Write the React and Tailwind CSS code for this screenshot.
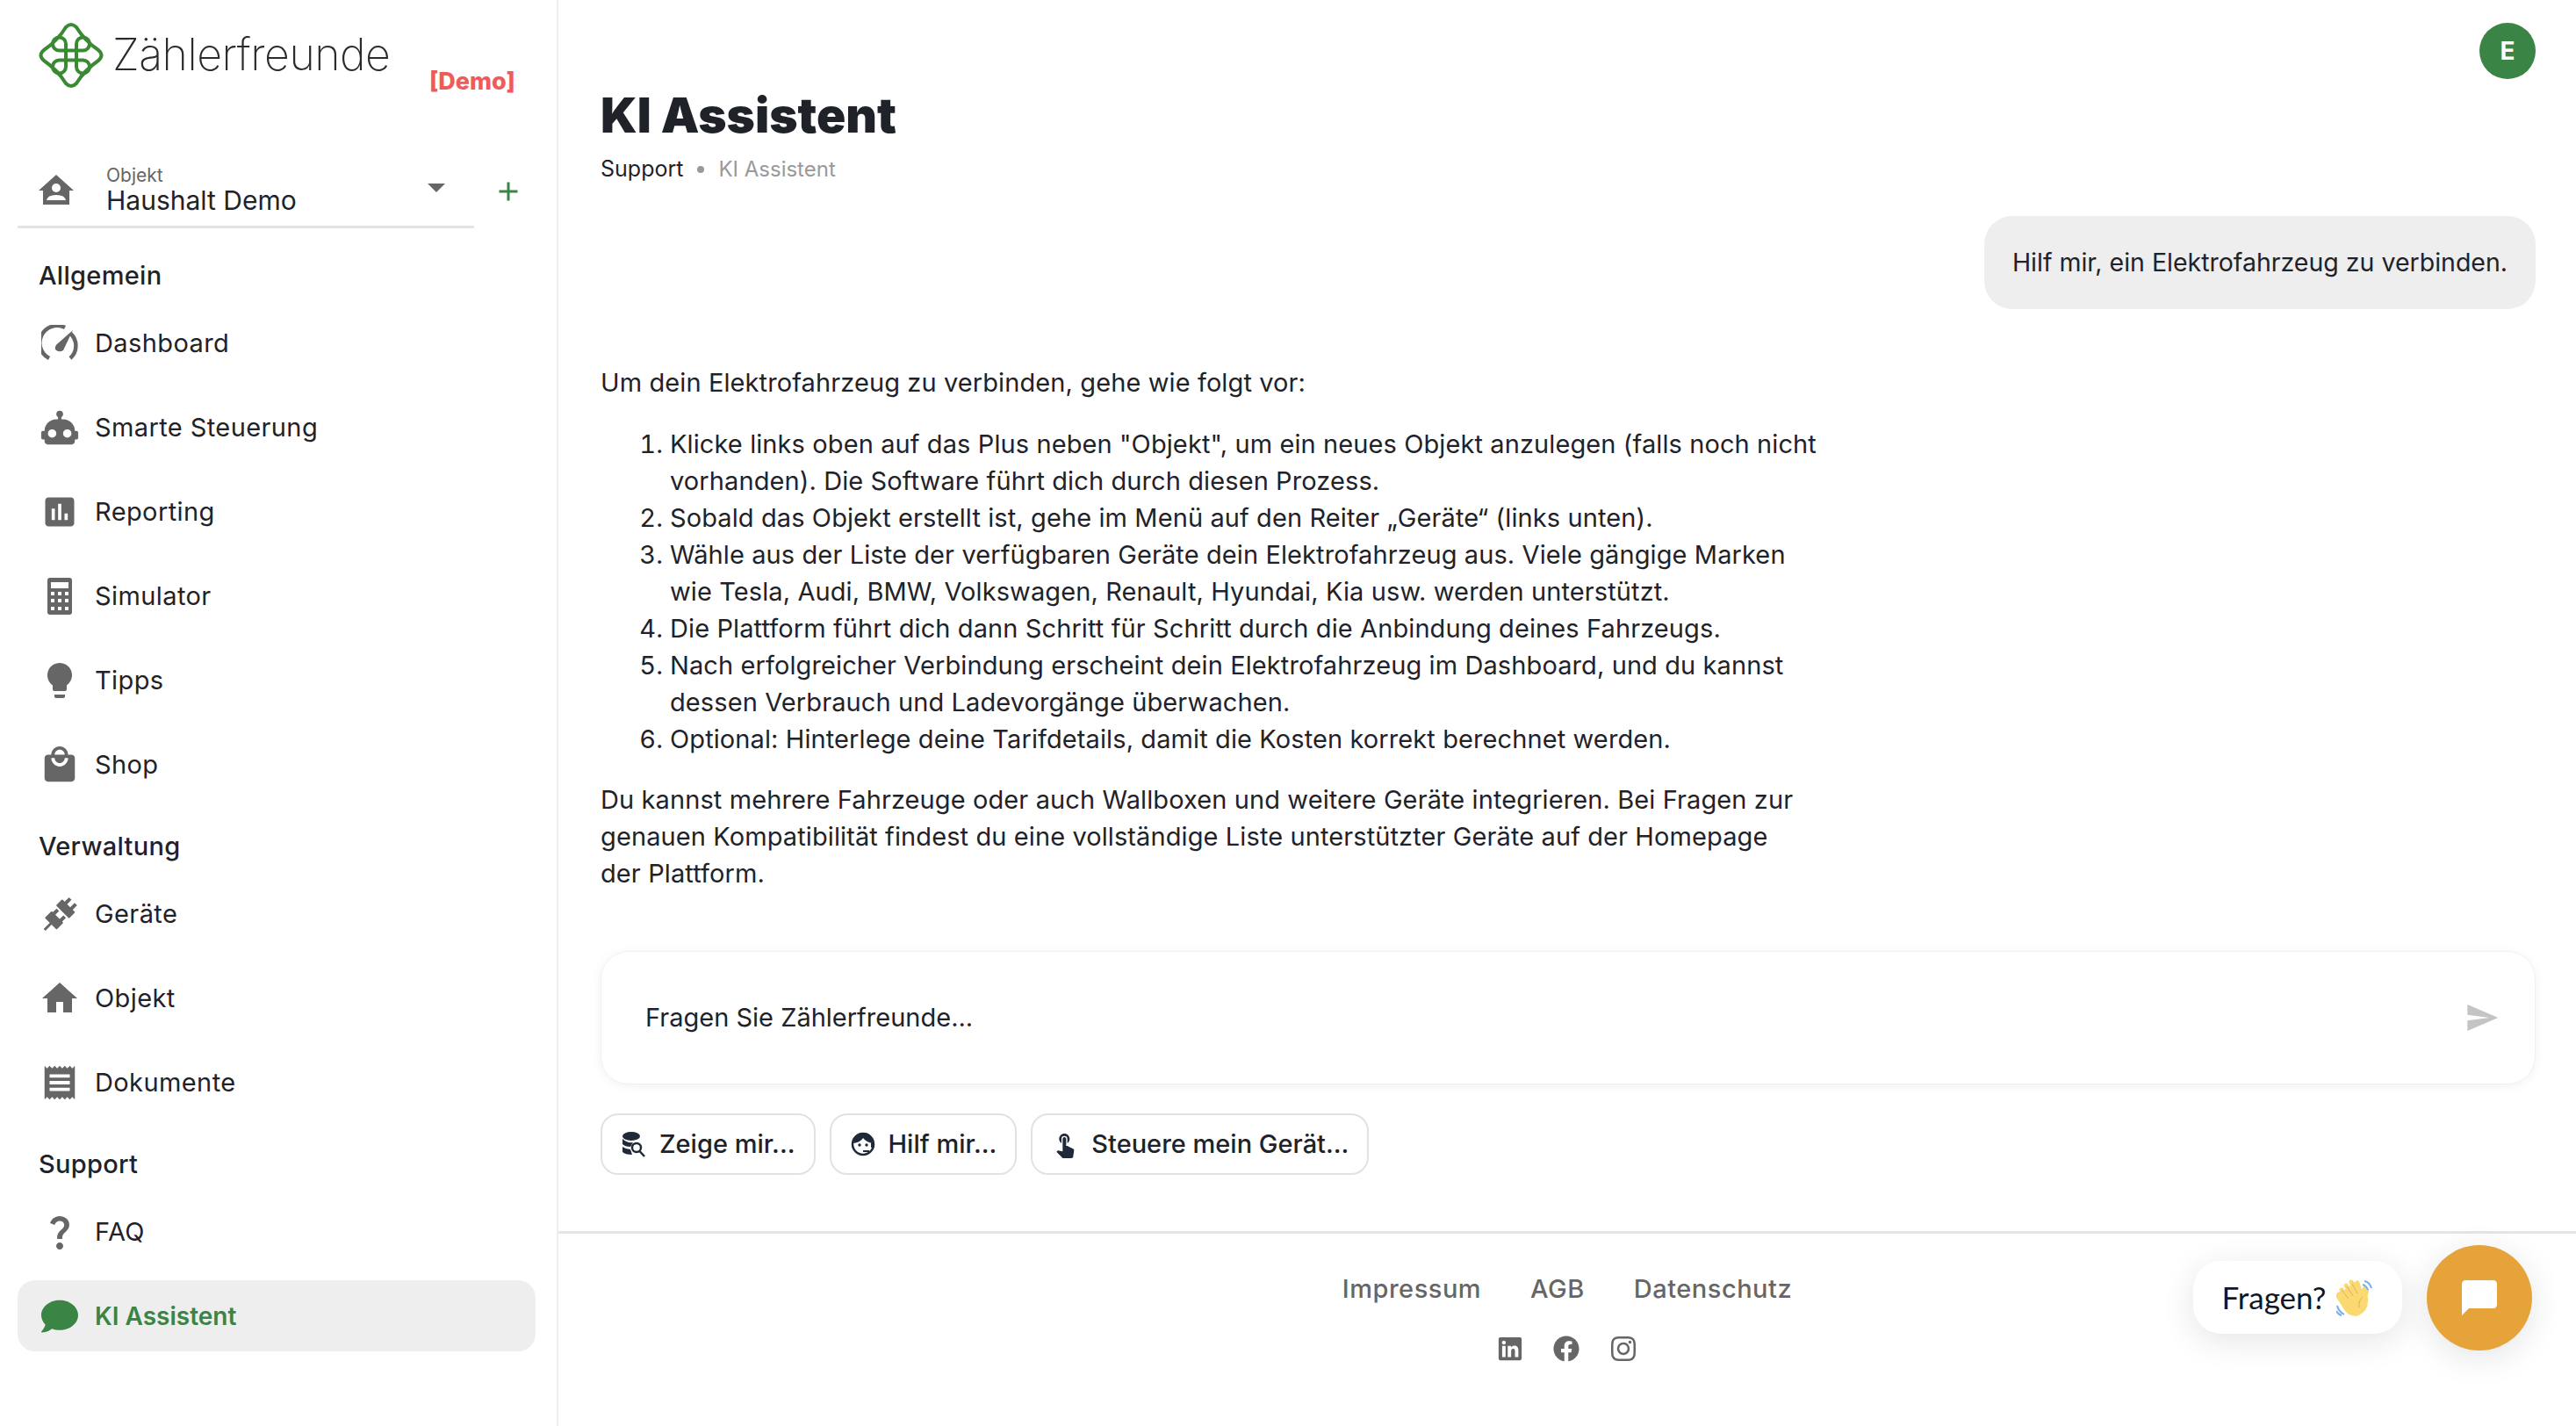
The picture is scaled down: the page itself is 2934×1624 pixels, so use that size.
import {
  MdAssessment,
  MdLightbulb,
  MdLocalMall,
  MdHome,
  MdReceipt,
  MdQuestionMark,
  MdSend,
  MdTouchApp,
  MdChatBubble,
  MdArrowDropDown,
  MdAdd,
} from "react-icons/md";
import { FaComment, FaLinkedin, FaFacebook, FaInstagram } from "react-icons/fa";

const sans = "font-['Inter','Liberation_Sans',sans-serif]";

function LogoMark() {
  return (
    <svg width="74" height="74" viewBox="0 0 74 74" fill="none" stroke="#3a8a34" strokeWidth="4">
      <path d="M31 5 Q37 -1 43 5 Q52 20 68 31 Q75 37 68 43 Q52 54 43 69 Q37 75 31 69 Q22 54 6 43 Q-1 37 6 31 Q22 20 31 5 Z" />
      <path d="M31 43 V50 A7.5 7.5 0 1 1 23.5 42.5 H50.5 A7.5 7.5 0 1 1 43 50 V24 A7.5 7.5 0 1 1 50.5 31.5 H23.5 A7.5 7.5 0 1 1 31 24 V43" />
    </svg>
  );
}

function DashIcon() {
  return (
    <svg width="42" height="42" viewBox="0 0 42 42" fill="none">
      <path d="M9 38 A19 19 0 0 1 27 3" stroke="#666" strokeWidth="4.5" />
      <path d="M33.5 10 A19 19 0 0 1 33 38" stroke="#666" strokeWidth="4.5" />
      <path d="M36 6 L25 29 Q20 32 16 28 Q15 24 19 21 Z" fill="#666" />
    </svg>
  );
}

function RobotIcon() {
  return (
    <svg width="46" height="46" viewBox="0 0 24 24" fill="#666">
      <path d="M12,2A2,2 0 0,1 14,4C14,4.74 13.6,5.39 13,5.73V7H14A7,7 0 0,1 21,14H22A1,1 0 0,1 23,15V18A1,1 0 0,1 22,19H21V20A2,2 0 0,1 19,22H5A2,2 0 0,1 3,20V19H2A1,1 0 0,1 1,18V15A1,1 0 0,1 2,14H3A7,7 0 0,1 10,7H11V5.73C10.4,5.39 10,4.74 10,4A2,2 0 0,1 12,2M7.5,13A2.5,2.5 0 0,0 5,15.5A2.5,2.5 0 0,0 7.5,18A2.5,2.5 0 0,0 10,15.5A2.5,2.5 0 0,0 7.5,13M16.5,13A2.5,2.5 0 0,0 14,15.5A2.5,2.5 0 0,0 16.5,18A2.5,2.5 0 0,0 19,15.5A2.5,2.5 0 0,0 16.5,13Z" />
    </svg>
  );
}

function CalculatorIcon() {
  return (
    <svg width="28" height="42" viewBox="0 0 28 42">
      <rect width="28" height="42" rx="3" fill="#666" />
      <rect x="4" y="5" width="20" height="7" fill="#fff" />
      {[16, 24, 33].map((y) =>
        [4, 12, 20].map((x) => <rect key={`${x}-${y}`} x={x} y={y} width="4" height="4" fill="#fff" />)
      )}
    </svg>
  );
}

function PlugIcon() {
  return (
    <svg width="46" height="46" viewBox="0 0 46 46" fill="#666">
      <g transform="rotate(45 23 23)">
        <rect x="22" y="37" width="3" height="11" />
        <rect x="14" y="27" width="19" height="11" rx="1" />
        <rect x="16" y="21" width="4" height="7" />
        <rect x="27" y="21" width="4" height="7" />
        <rect x="13" y="9" width="21" height="10" rx="1" />
        <rect x="17" y="2" width="4" height="8" />
        <rect x="26" y="2" width="4" height="8" />
      </g>
    </svg>
  );
}

function HouseUserIcon() {
  return (
    <svg width="40" height="34" viewBox="0 0 40 34">
      <path d="M20 0 L40 18 H35 V34 H5 V18 H0 Z" fill="#666" />
      <circle cx="20" cy="15" r="5" fill="#fff" />
      <path d="M9 29 Q10 23 20 23 Q30 23 31 29 Z" fill="#fff" />
    </svg>
  );
}

function DbSearchIcon() {
  return (
    <svg width="30" height="30" viewBox="0 0 30 30">
      <ellipse cx="12" cy="6" rx="10" ry="5" fill="#1f2937" />
      <path d="M2 9 Q7 14 14 13 L11 18 Q5 18 2 15 Z" fill="#1f2937" />
      <path d="M2 18 Q6 21 11 21 L13 27 Q5 27 2 24 Z" fill="#1f2937" />
      <circle cx="18" cy="19" r="5" fill="none" stroke="#1f2937" strokeWidth="2.5" />
      <path d="M21.5 23 L27 29" stroke="#1f2937" strokeWidth="2.5" />
    </svg>
  );
}

function AgentIcon() {
  return (
    <svg width="30" height="30" viewBox="0 0 30 30" fill="none">
      <circle cx="15" cy="15" r="12" stroke="#1f2937" strokeWidth="2.5" />
      <path d="M4 14 Q5 2 15 2 Q26 2 26 14 Q19 13 15 8 Q12 13 4 14 Z" fill="#1f2937" />
      <circle cx="11" cy="16" r="1.7" fill="#1f2937" />
      <circle cx="19" cy="16" r="1.7" fill="#1f2937" />
      <rect x="24" y="13" width="4" height="6" rx="1" fill="#1f2937" />
      <path d="M15 23 H22" stroke="#1f2937" strokeWidth="2" />
    </svg>
  );
}

function WaveEmoji() {
  return (
    <svg width="42" height="42" viewBox="0 0 42 42" fill="none">
      <path d="M6 12 L16 24 M11 7 L20 19 M17 3 L24 16 M24 4 L28 17 L33 10 Q36 12 33 18 Q36 34 24 39 Q14 41 8 28 L2 19 Q3 15 7 17 Z" fill="#fbd971" stroke="#fbd971" strokeWidth="5" strokeLinejoin="round" strokeLinecap="round" />
      <path d="M6 12 L14 22 M12 8 L19 19 M18 5 L24 16" stroke="#e9a86b" strokeWidth="1" />
      <path d="M30 20 Q25 24 26 32" stroke="#e9a86b" strokeWidth="1" />
      <path d="M32 2 Q38 3 40 10 M30 6 Q34 7 36 12 M1 30 Q2 36 9 40 M0 36 Q2 40 6 41" stroke="#74b0e8" strokeWidth="2" />
    </svg>
  );
}

const groups = [
  {
    title: "Allgemein",
    items: [
      { label: "Dashboard", icon: <DashIcon /> },
      { label: "Smarte Steuerung", icon: <RobotIcon /> },
      { label: "Reporting", icon: <MdAssessment size={44} color="#666" /> },
      { label: "Simulator", icon: <CalculatorIcon /> },
      { label: "Tipps", icon: <MdLightbulb size={48} color="#666" /> },
      { label: "Shop", icon: <MdLocalMall size={46} color="#666" /> },
    ],
  },
  {
    title: "Verwaltung",
    items: [
      { label: "Geräte", icon: <PlugIcon /> },
      { label: "Objekt", icon: <MdHome size={48} color="#666" /> },
      { label: "Dokumente", icon: <MdReceipt size={46} color="#666" /> },
    ],
  },
  {
    title: "Support",
    items: [
      { label: "FAQ", icon: <MdQuestionMark size={50} color="#666" /> },
      { label: "KI Assistent", active: true, icon: <FaComment size={42} color="#3a8445" /> },
    ],
  },
];

const chips = [
  { label: "Zeige mir...", icon: <DbSearchIcon /> },
  { label: "Hilf mir...", icon: <AgentIcon /> },
  { label: "Steuere mein Gerät...", icon: <MdTouchApp size={32} color="#1f2937" /> },
];

function Sidebar() {
  return (
    <aside className="w-[636px] shrink-0 border-r-2 border-[#eeeeee] flex flex-col">
      {/* Logo */}
      <div className="h-[180px] pl-[44px] pt-[26px] flex items-start relative">
        <LogoMark />
        <span className="ml-[10px] mt-[6px] text-[50px] leading-[60px] font-extralight text-[#2b2b2b] tracking-[-0.5px]">
          Zählerfreunde
        </span>
        <span className="absolute left-[489px] top-[76px] text-[27px] leading-[34px] font-extrabold text-[#ef5b5b]">
          [Demo]
        </span>
      </div>

      {/* Objekt */}
      <div className="flex items-start">
        <div className="ml-[20px] w-[520px] h-[80px] border-b-[3px] border-[#e3e3e3] flex items-center pl-[24px] pb-[6px]">
          <HouseUserIcon />
          <div className="ml-[37px] flex-1 flex flex-col">
            <span className="text-[21px] leading-[24px] text-[#666]">Objekt</span>
            <span className="text-[30px] leading-[32px] text-[#1f2329]">Haushalt Demo</span>
          </div>
          <MdArrowDropDown size={48} color="#666" className="mr-[19px] -mt-[6px]" />
        </div>
        <MdAdd size={36} color="#3a8445" className="ml-[21px] mt-[20px]" />
      </div>

      {/* Navigation */}
      <nav className="mt-[33px] flex flex-col gap-[17px]">
        {groups.map((group) => (
          <div key={group.title}>
            <div className="h-[42px] mb-[15px] pl-[44px] text-[29px] tracking-[0.3px] leading-[42px] font-medium text-[#1f2329]">
              {group.title}
            </div>
            {group.items.map((item) => (
              <div
                key={item.label}
                className={
                  item.active
                    ? "ml-[20px] mr-[24px] h-[81px] mb-[15px] rounded-[20px] bg-[#eeeeee] flex items-center pl-[24px] text-[#3a8445] font-semibold text-[28px]"
                    : "ml-[20px] mr-[24px] h-[81px] mb-[15px] rounded-[20px] flex items-center pl-[24px] text-[#1f2329] text-[29px] tracking-[0.4px]"
                }
              >
                <span className="w-[48px] flex justify-center">{item.icon}</span>
                <span className="ml-[16px] leading-[42px]">{item.label}</span>
              </div>
            ))}
          </div>
        ))}
      </nav>
    </aside>
  );
}

function Answer() {
  return (
    <div className="mt-[63px] text-[29px] tracking-[0.1px] leading-[42px] text-[#1f2329] whitespace-nowrap">
      <p>Um dein Elektrofahrzeug zu verbinden, gehe wie folgt vor:</p>
      <ol className="mt-[28px] list-decimal pl-[79px]">
        <li>
          Klicke links oben auf das Plus neben "Objekt", um ein neues Objekt anzulegen (falls noch nicht
          <br />
          vorhanden). Die Software führt dich durch diesen Prozess.
        </li>
        <li>Sobald das Objekt erstellt ist, gehe im Menü auf den Reiter „Geräte“ (links unten).</li>
        <li>
          Wähle aus der Liste der verfügbaren Geräte dein Elektrofahrzeug aus. Viele gängige Marken
          <br />
          wie Tesla, Audi, BMW, Volkswagen, Renault, Hyundai, Kia usw. werden unterstützt.
        </li>
        <li>Die Plattform führt dich dann Schritt für Schritt durch die Anbindung deines Fahrzeugs.</li>
        <li>
          Nach erfolgreicher Verbindung erscheint dein Elektrofahrzeug im Dashboard, und du kannst
          <br />
          dessen Verbrauch und Ladevorgänge überwachen.
        </li>
        <li>Optional: Hinterlege deine Tarifdetails, damit die Kosten korrekt berechnet werden.</li>
      </ol>
      <p className="mt-[27px]">
        Du kannst mehrere Fahrzeuge oder auch Wallboxen und weitere Geräte integrieren. Bei Fragen zur
        <br />
        genauen Kompatibilität findest du eine vollständige Liste unterstützter Geräte auf der Homepage
        <br />
        der Plattform.
      </p>
    </div>
  );
}

function Footer() {
  return (
    <footer className="relative h-[222px] shrink-0 border-t-[3px] border-[#e5e5e5] flex flex-col items-center">
      <div className="mt-[42px] flex gap-[56px] text-[29px] tracking-[0.5px] leading-[42px] font-medium text-[#666]">
        <span>Impressum</span>
        <span>AGB</span>
        <span>Datenschutz</span>
      </div>
      <div className="mt-[31px] flex items-center gap-[34px]">
        <FaLinkedin size={30} color="#666" />
        <FaFacebook size={30} color="#666" />
        <FaInstagram size={32} color="#666" />
      </div>

      {/* Chat launcher */}
      <div className="absolute left-[1862px] top-[31px] w-[238px] h-[83px] rounded-[32px] bg-white shadow-[0_8px_36px_rgba(30,41,59,0.12)] flex items-center justify-center gap-[12px]">
        <span className="text-[35px] text-[#0f172a] font-['Lato',sans-serif]">Fragen?</span>
        <WaveEmoji />
      </div>
      <div className="absolute left-[2128px] top-[13px] w-[120px] h-[120px] rounded-full bg-[#e5a33a] shadow-[0_8px_36px_rgba(30,41,59,0.12)] flex items-center justify-center">
        <MdChatBubble size={48} color="#fff" />
      </div>
    </footer>
  );
}

export default function App() {
  return (
    <div className={`${sans} w-[2934px] h-[1624px] bg-white flex overflow-hidden`}>
      <Sidebar />
      <main className="flex-1 flex flex-col min-w-0">
        <div className="flex-1 pl-[48px] pr-[46px]">
          <div className="pt-[26px] flex justify-end">
            <div className="w-[64px] h-[64px] rounded-full bg-[#3a8445] text-white text-[28px] font-bold flex items-center justify-center">
              E
            </div>
          </div>
          <h1 className="mt-[5px] text-[55px] leading-[72px] font-black text-[#1f2329]">KI Assistent</h1>
          <div className="mt-[6px] h-[40px] flex items-center text-[25px] text-[#1f2329]">
            <span>Support</span>
            <span className="mx-[16px] w-[8px] h-[8px] rounded-full bg-[#9a9a9a]" />
            <span className="text-[24px] text-[#999]">KI Assistent</span>
          </div>

          <div className="mt-[33px] flex justify-end">
            <div className="h-[106px] rounded-[32px] bg-[#eeeeee] px-[32px] flex items-center text-[28.5px] text-[#1f2329]">
              Hilf mir, ein Elektrofahrzeug zu verbinden.
            </div>
          </div>

          <Answer />

          {/* Input */}
          <div className="mt-[67px] h-[152px] rounded-[32px] border border-[#f0f0f0] shadow-[0_2px_12px_rgba(0,0,0,0.06)] pl-[50px] pr-[40px] flex items-center justify-between text-[29px] text-[#1f2329]">
            <span>Fragen Sie Zählerfreunde...</span>
            <MdSend size={40} color="#c4c4c4" />
          </div>

          {/* Prompt chips */}
          <div className="mt-[33px] flex gap-[16px]">
            {chips.map((chip) => (
              <div
                key={chip.label}
                className="h-[70px] rounded-[20px] border-2 border-[#e2e2e2] px-[21px] flex items-center gap-[14px] text-[29px] font-medium text-[#1f2329]"
              >
                {chip.icon}
                <span>{chip.label}</span>
              </div>
            ))}
          </div>
        </div>
        <Footer />
      </main>
    </div>
  );
}
